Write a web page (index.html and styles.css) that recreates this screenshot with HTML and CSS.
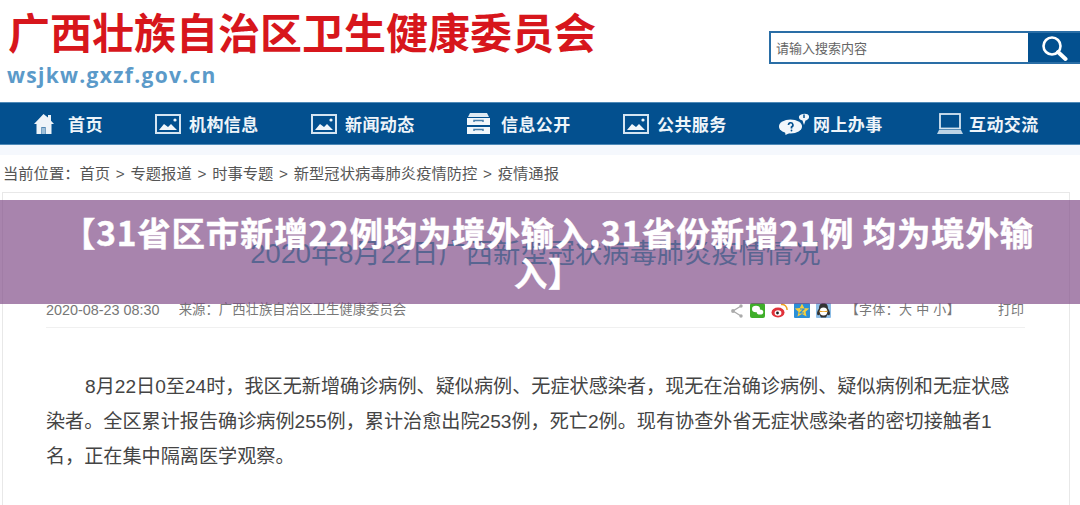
FILE: index.html
```html
<!DOCTYPE html>
<html lang="zh-CN">
<head>
<meta charset="utf-8">
<title>疫情通报</title>
<link rel="stylesheet" href="styles.css">
</head>
<body>
<header class="top">
  <div class="brand">
    <div class="brand-name">广西壮族自治区卫生健康委员会</div>
    <div class="brand-url">wsjkw.gxzf.gov.cn</div>
  </div>
  <div class="search">
    <span class="search-text">请输入搜索内容</span>
    <span class="search-btn">
      <svg width="28" height="28" viewBox="0 0 28 28"><circle cx="12" cy="12" r="8.500" fill="none" stroke="#fff" stroke-width="2.600"/><path d="M18 18l7.500 7" stroke="#fff" stroke-width="4" stroke-linecap="round"/></svg>
    </span>
  </div>
</header>
<nav class="nav">
  <a class="nav-item nav-first"><span class="nav-icon"><svg width="20" height="20" viewBox="0 0 20 20"><path d="M9.500 0L0 10h2.500v10h5v-7h4v7h6V10H20l-3-3.200V1h-3v2.600L12 2z" fill="#eef4f9"/><rect x="8" y="13.500" width="3" height="6.500" fill="#9fc0da"/></svg></span>首页</a>
  <a class="nav-item"><span class="nav-icon"><svg width="26" height="20" viewBox="0 0 26 20"><rect x="1" y="1" width="24" height="18" fill="none" stroke="#d5e5f2" stroke-width="2"/><path d="M4 16l5-6 4 3 3-3 6 6z" fill="#f2f7fb"/><circle cx="20" cy="6" r="1.600" fill="#f2f7fb"/></svg></span>机构信息</a>
  <a class="nav-item"><span class="nav-icon"><svg width="26" height="20" viewBox="0 0 26 20"><rect x="1" y="1" width="24" height="18" fill="none" stroke="#d5e5f2" stroke-width="2"/><path d="M4 16l5-6 4 3 3-3 6 6z" fill="#f2f7fb"/><circle cx="20" cy="6" r="1.600" fill="#f2f7fb"/></svg></span>新闻动态</a>
  <a class="nav-item"><span class="nav-icon"><svg width="23" height="21" viewBox="0 0 23 21"><path d="M3 0h17l2 4H1z" fill="#dfeaf3"/><path d="M0 5h23v7H0z" fill="#f2f7fb"/><path d="M0 14h23v7H0z" fill="#f2f7fb"/><path d="M7 9V7.500h9V9" fill="none" stroke="#4a80ab" stroke-width="1.500"/><path d="M7 18v-1.500h9V18" fill="none" stroke="#4a80ab" stroke-width="1.500"/></svg></span>信息公开</a>
  <a class="nav-item"><span class="nav-icon"><svg width="26" height="20" viewBox="0 0 26 20"><rect x="1" y="1" width="24" height="18" fill="none" stroke="#d5e5f2" stroke-width="2"/><path d="M4 16l5-6 4 3 3-3 6 6z" fill="#f2f7fb"/><circle cx="20" cy="6" r="1.600" fill="#f2f7fb"/></svg></span>公共服务</a>
  <a class="nav-item"><span class="nav-icon"><svg width="30" height="22" viewBox="0 0 30 22"><ellipse cx="11.500" cy="13.500" rx="11.500" ry="7" fill="#f2f7fb"/><path d="M6 18l.5 4 5-2.500z" fill="#f2f7fb"/><path d="M9.500 12a2.200 2.200 0 1 1 3 2v1.500" fill="none" stroke="#03508f" stroke-width="1.700"/><circle cx="12.500" cy="17.500" r=".9" fill="#03508f"/><path d="M20 3.500C21 .5 29-.5 30 3c.5 3-2 4-3.500 4.500L25 12l-1.500-4.500C21.500 7 19.500 6 20 3.500z" fill="#f2f7fb"/><path d="M25 1.500v3.500" stroke="#03508f" stroke-width="1.500"/></svg></span>网上办事</a>
  <a class="nav-item"><span class="nav-icon nav-icon-pc"><svg width="26" height="21" viewBox="0 0 26 21"><rect x="3" y="1" width="20" height="14.500" fill="none" stroke="#d5e5f2" stroke-width="1.800"/><path d="M2 17h22l2 4H0z" fill="#bcd3e6"/></svg></span>互动交流</a>
</nav>
<div class="strip"></div>
<div class="crumbs">当前位置：首页 &gt; 专题报道 &gt; 时事专题 &gt; 新型冠状病毒肺炎疫情防控 &gt; 疫情通报</div>
<main class="card">
  <h1 class="title">2020年8月22日广西新型冠状病毒肺炎疫情情况</h1>
  <div class="meta">
    <div class="meta-left"><span class="date">2020-08-23 08:30</span><span class="source">来源：广西壮族自治区卫生健康委员会</span></div>
    <div class="meta-right">
      <svg class="share" width="12" height="14" viewBox="0 0 12 14"><path d="M10 2L2 7l8 5" fill="none" stroke="#aaa" stroke-width="1.300"/><circle cx="10" cy="2" r="1.700" fill="#aaa"/><circle cx="2" cy="7" r="1.900" fill="#aaa"/><circle cx="10" cy="12" r="1.700" fill="#aaa"/></svg>
      <span class="socials">
        <svg width="15" height="15" viewBox="0 0 15 15"><rect width="15" height="15" rx="2" fill="#3fae29"/><ellipse cx="6" cy="6" rx="4" ry="3.200" fill="#fff"/><ellipse cx="10" cy="9" rx="3.300" ry="2.600" fill="#fff"/></svg>
        <svg width="17" height="15" viewBox="0 0 17 15"><ellipse cx="7" cy="9.500" rx="6.500" ry="5" fill="#e0323a"/><ellipse cx="7" cy="10" rx="3.400" ry="2.700" fill="#fff"/><circle cx="6.500" cy="10" r="1.400" fill="#222"/><path d="M10 1.500a5 5 0 0 1 6 5.500" fill="none" stroke="#f0a020" stroke-width="1.500"/></svg>
        <svg width="16" height="15" viewBox="0 0 16 15"><rect width="16" height="15" rx="1" fill="#2b8fd6"/><path d="M8 .5l2.200 4.500 5 .6-3.700 3.200 1 4.700-4.500-2.400-4.500 2.400 1-4.700L.8 5.600l5-.6z" fill="#f7cf3c"/><path d="M6 6h4L6 10h4" fill="none" stroke="#2b8fd6" stroke-width="1.200"/></svg>
        <svg width="15" height="15" viewBox="0 0 15 15"><rect width="15" height="15" rx="1" fill="#8dbde6"/><path d="M7.500 0C4 0 3 2.500 3 5.500 1 8 .5 11 1.500 12c1 .8 1.500 0 2-.5L5 14.500h5l1.500-3c.5.5 1 1.300 2 .5s.5-4-1.500-6.500C12 2.500 11 0 7.500 0z" fill="#333"/><ellipse cx="7.500" cy="8.500" rx="3.800" ry="4" fill="#fff"/><path d="M3.500 7.500c2 1 6 1 8 0v1.500h-8z" fill="#e8a020"/></svg>
      </span>
      <span class="fontsize">【字体：大 中 小】</span>
      <span class="print">打印</span>
    </div>
  </div>
  <div class="body">
    <p>8月22日0至24时，我区无新增确诊病例、疑似病例、无症状感染者，现无在治确诊病例、疑似病例和无症状感染者。全区累计报告确诊病例255例，累计治愈出院253例，死亡2例。现有协查外省无症状感染者的密切接触者1名，正在集中隔离医学观察。</p>
  </div>
</main>
<div class="overlay">【31省区市新增22例均为境外输入,31省份新增21例 均为境外输入】</div>
</body>
</html>
```
FILE: styles.css
```css
* { box-sizing: border-box; }
html, body { margin: 0; padding: 0; }
body {
  width: 1080px;
  height: 505px;
  overflow: hidden;
  position: relative;
  background: #fff;
  font-family: "Liberation Sans", "Noto Sans CJK SC", sans-serif;
  color: #555;
}
.top {
  height: 102px;
  display: flex;
  justify-content: space-between;
  padding: 6px 0 0 8px;
}
.brand-name {
  font-family: "Noto Sans CJK SC", sans-serif;
  font-weight: 700;
  font-size: 42px;
  line-height: 50px;
  color: #d7161c;
  white-space: nowrap;
}
.brand-url {
  font-family: "Open Sans", sans-serif;
  font-weight: 700;
  font-size: 21px;
  line-height: 28px;
  margin: 5px 0 0 -1px;
  letter-spacing: 1.3px;
  color: #5b9ac9;
}
.search {
  width: 311px;
  height: 33px;
  margin-top: 25px;
  border: 2px solid #2a6ea6;
  border-right: 0;
  display: flex;
  justify-content: space-between;
  align-items: center;
}
.search-text {
  font-size: 13px;
  color: #666;
  padding-left: 5px;
}
.search-btn {
  width: 52px;
  height: 29px;
  background: #03508f;
  display: flex;
  align-items: center;
  justify-content: center;
}
.nav {
  height: 43px;
  background: #03508f;
  border-top: 1px solid #4f8ab8;
  border-bottom: 1px solid #4f8ab8;
  display: flex;
  padding-left: 34px;
}
.nav-item {
  flex: none;
  width: 156px;
  display: flex;
  align-items: center;
  font-size: 17px;
  letter-spacing: 0.4px;
  font-weight: 700;
  color: #eef4f9;
  font-family: "Noto Sans CJK SC", sans-serif;
}
.nav-first { width: 121px; }
.nav-icon {
  width: 34px;
  flex: none;
  display: flex;
  align-items: center;
}
.nav-icon-pc { padding-left: 2px; }
.strip { height: 10px; background: #f5f8fd; }
.crumbs {
  height: 37px;
  padding: 9px 0 0 3px;
  font-size: 15.3px;
  word-spacing: 1.5px;
  line-height: 20px;
  color: #555;
}
.card {
  width: 1068px;
  height: 320px;
  margin-left: 2px;
  border: 1px solid #e8e8e8;
  padding: 0 44px 0 43px;
}
.title {
  margin: 43px 0 0;
  height: 36px;
  font-size: 27.3px;
  line-height: 36px;
  font-weight: 400;
  text-align: center;
  color: #0b9ea7;
}
.meta {
  margin-top: 29px;
  height: 27px;
  display: flex;
  justify-content: space-between;
  align-items: flex-start;
  font-size: 14px;
  line-height: 18px;
  color: #777;
  border-bottom: 1px solid #f0f0f0;
}
.meta-left { display: flex; gap: 19px; }
.date { font-size: 14.4px; }
.source { font-size: 13.4px; }
.meta-right { display: flex; align-items: center; font-size: 13px; }
.share { margin-top: 1px; }
.socials { display: flex; align-items: center; gap: 6px; margin: 0 15px 0 7px; }
.fontsize { letter-spacing: 0.3px; }
.print { margin-left: 38px; margin-right: 1px; }
.body p {
  margin: 41px 0 0;
  font-size: 19.14px;
  line-height: 35px;
  text-indent: 39px;
  color: #444;
}
.overlay {
  position: absolute;
  left: 0;
  top: 200px;
  width: 1080px;
  height: 104px;
  padding: 12px 40px 0 56px;
  background: rgba(127, 73, 134, 0.68);
  color: #fff;
  text-align: center;
  font-family: "Noto Sans CJK SC", sans-serif;
  font-weight: 700;
  font-size: 33.5px;
  letter-spacing: 0.75px;
  line-height: 40px;
  -webkit-text-stroke: 0.4px #fff;
}
```
